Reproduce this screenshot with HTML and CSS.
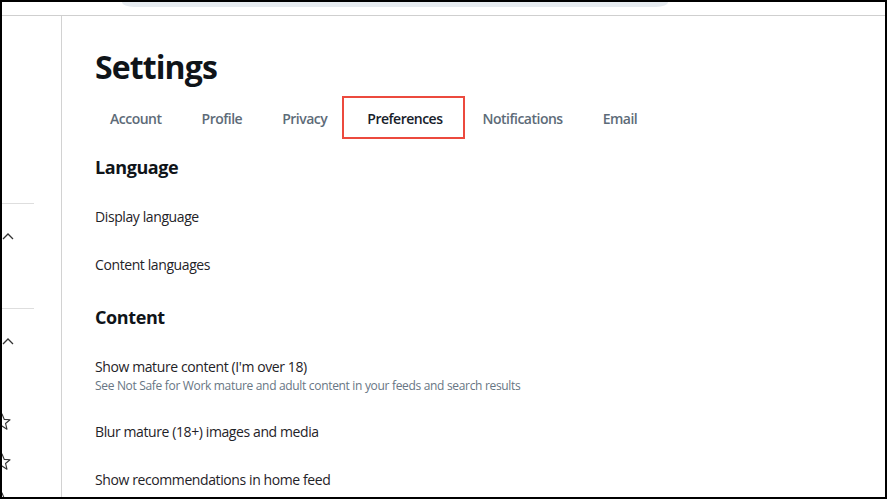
FILE: index.html
```html
<!DOCTYPE html>
<html lang="en">
<head>
<meta charset="utf-8">
<title>Settings</title>
<link rel="stylesheet" href="styles.css">
</head>
<body>
<div class="frame">
  <header class="topbar">
    <div class="search"></div>
  </header>
  <div class="layout">
    <aside class="sidebar">
      <div class="sep sep-first"></div>
      <svg class="chev" width="12" height="7" viewBox="0 0 12 7"><path d="M1 6 L6 1 L11 6" fill="none" stroke="#333" stroke-width="1.3"/></svg>
      <div class="sep sep-second"></div>
      <svg class="chev" width="12" height="7" viewBox="0 0 12 7"><path d="M1 6 L6 1 L11 6" fill="none" stroke="#333" stroke-width="1.3"/></svg>
      <svg class="star star-1" width="18" height="18" viewBox="0 0 16 16"><path d="M8 0.8 L9.94 5.63 L15.13 5.98 L11.14 9.32 L12.41 14.37 L8 11.6 L3.59 14.37 L4.86 9.32 L0.87 5.98 L6.06 5.63 Z" fill="none" stroke="#333" stroke-width="1" stroke-linejoin="round"/></svg>
      <svg class="star star-2" width="18" height="18" viewBox="0 0 16 16"><path d="M8 0.8 L9.94 5.63 L15.13 5.98 L11.14 9.32 L12.41 14.37 L8 11.6 L3.59 14.37 L4.86 9.32 L0.87 5.98 L6.06 5.63 Z" fill="none" stroke="#333" stroke-width="1" stroke-linejoin="round"/></svg>
      <svg class="star star-3" width="18" height="18" viewBox="0 0 16 16"><path d="M8 0.8 L9.94 5.63 L15.13 5.98 L11.14 9.32 L12.41 14.37 L8 11.6 L3.59 14.37 L4.86 9.32 L0.87 5.98 L6.06 5.63 Z" fill="none" stroke="#333" stroke-width="1" stroke-linejoin="round"/></svg>
    </aside>
    <main class="main">
      <h1 class="title">Settings</h1>
      <nav class="tabs">
        <span class="tab">Account</span>
        <span class="tab">Profile</span>
        <span class="tab">Privacy</span>
        <span class="tab tab-active">Preferences</span>
        <span class="tab">Notifications</span>
        <span class="tab">Email</span>
      </nav>
      <h2 class="section-title">Language</h2>
      <div class="item">Display language</div>
      <div class="item">Content languages</div>
      <h2 class="section-title">Content</h2>
      <div class="item">
        <div>Show mature content (I'm over 18)</div>
        <div class="item-sub">See Not Safe for Work mature and adult content in your feeds and search results</div>
      </div>
      <div class="item">Blur mature (18+) images and media</div>
      <div class="item">Show recommendations in home feed</div>
    </main>
  </div>
</div>
</body>
</html>
```

FILE: styles.css
```css
* { box-sizing: border-box; }
html, body { margin: 0; padding: 0; background: #fff; }
body {
  font-family: "Open Sans", "Noto Sans", sans-serif;
  color: #1f2328;
}
.frame {
  width: 887px;
  height: 499px;
  border: 2px solid #000;
  display: flex;
  flex-direction: column;
  overflow: hidden;
  background: #fff;
}
.topbar {
  height: 14px;
  flex: none;
  border-bottom: 1px solid #cfcfcf;
}
.search {
  margin-left: 120px;
  width: 546px;
  height: 5px;
  background: #e6ebf0;
  border-radius: 0 0 12px 12px / 0 0 5px 5px;
}
.layout {
  flex: 1;
  display: flex;
  min-height: 0;
}
.sidebar {
  width: 60px;
  flex: none;
  border-right: 1px solid #d2d2d2;
  display: flex;
  flex-direction: column;
  align-items: flex-start;
  overflow: hidden;
}
.sep {
  width: 32px;
  height: 1px;
  background: #dedede;
  flex: none;
}
.sep-first { margin-top: 187px; }
.sep-second { margin-top: 68px; }
.chev { display: block; flex: none; margin-top: 29px; }
.star { display: block; flex: none; margin-left: -9px; }
.star-1 { margin-top: 68px; }
.star-2 { margin-top: 22px; }
.star-3 { margin-top: 21px; }

.main {
  flex: 1;
  padding: 31px 0 0 33px;
  overflow: hidden;
}
.title {
  margin: 0;
  font-size: 32px;
  line-height: 40px;
  font-weight: 700;
  letter-spacing: -0.9px;
  color: #0f1419;
}
.tabs {
  margin: 9px 0 0 -5px;
  display: flex;
  height: 43px;
}
.tab {
  position: relative;
  padding: 13px 20px 10px;
  line-height: 20px;
  font-size: 14px;
  font-weight: 600;
  letter-spacing: -0.5px;
  color: #5d6b78;
}
.tab-active { color: #16202a; }
.tab-active::after {
  content: "";
  position: absolute;
  top: 0;
  bottom: 0;
  left: -5px;
  right: -3px;
  border: 2px solid #ec4a3e;
}
.section-title {
  margin: 0;
  padding: 16px 0 13px;
  font-size: 18px;
  line-height: 25px;
  font-weight: 700;
  letter-spacing: -0.4px;
  color: #0f1419;
}
.item {
  padding: 14px 0;
  font-size: 14px;
  line-height: 20px;
  letter-spacing: -0.4px;
  color: #1f2328;
}
.item-sub {
  font-size: 12px;
  line-height: 17px;
  letter-spacing: -0.32px;
  color: #687684;
}
```
